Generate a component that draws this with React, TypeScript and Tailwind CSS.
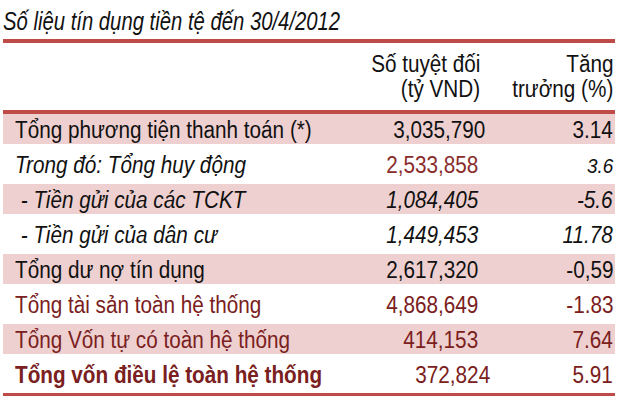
import React from 'react';

type Row = {
  label: string;
  value: string;
  growth: string;
  pink: boolean;
  labelCls: string;
  valueCls: string;
  growthCls: string;
};

const rows: Row[] = [
  { label: 'Tổng phương tiện thanh toán (*)', value: '3,035,790', growth: '3.14', pink: true, labelCls: 'text-[#111]', valueCls: 'text-[#111]', growthCls: 'text-[#111]' },
  { label: 'Trong đó: Tổng huy động', value: '2,533,858', growth: '3.6', pink: false, labelCls: 'italic text-[#111]', valueCls: 'text-[#8a2c2c]', growthCls: 'italic text-[21px] text-[#111]' },
  { label: ' - Tiền gửi của các TCKT', value: '1,084,405', growth: '-5.6', pink: true, labelCls: 'italic text-[#111]', valueCls: 'italic text-[#111]', growthCls: 'italic text-[#111]' },
  { label: ' - Tiền gửi của dân cư', value: '1,449,453', growth: '11.78', pink: false, labelCls: 'italic text-[#111]', valueCls: 'italic text-[#111]', growthCls: 'italic text-[#111]' },
  { label: 'Tổng dư nợ tín dụng', value: '2,617,320', growth: '-0,59', pink: true, labelCls: 'text-[#111]', valueCls: 'text-[#111]', growthCls: 'text-[#111]' },
  { label: 'Tổng tài sản toàn hệ thống', value: '4,868,649', growth: '-1.83', pink: false, labelCls: 'text-[#7a2020]', valueCls: 'text-[#7a2020]', growthCls: 'text-[#7a2020]' },
  { label: 'Tổng Vốn tự có toàn hệ thống', value: '414,153', growth: '7.64', pink: true, labelCls: 'text-[#7a2020]', valueCls: 'text-[#7a2020]', growthCls: 'text-[#7a2020]' },
  { label: 'Tổng vốn điều lệ toàn hệ thống', value: '372,824', growth: '5.91', pink: false, labelCls: 'font-bold text-[#7a2020]', valueCls: 'text-[#7a2020]', growthCls: 'text-[#7a2020]' },
];

// the source uses a condensed Arial; squeeze Liberation Sans to match
const Narrow = ({ children, right }: { children: React.ReactNode; right?: boolean }) => (
  <span className={`inline-block whitespace-pre scale-x-[0.9] ${right ? 'origin-right' : 'origin-left'}`}>{children}</span>
);

export default function App() {
  return (
    <div className="w-[620px] h-[400px] bg-white overflow-hidden font-['Liberation_Sans',Arial,sans-serif]">
      <div className="h-[39px] pl-[3px] pt-[6px] text-[26px] leading-[30px] italic text-[#111] whitespace-nowrap">
        <span className="inline-block origin-left scale-x-[0.78]">Số liệu tín dụng tiền tệ đến 30/4/2012</span>
      </div>
      <div className="mx-[3px] w-[612px]">
        <div className="h-[4px] bg-[#bf4b49]" />
        <div className="h-[67px] flex pt-[9px] text-[23px] leading-[25px] text-[#111]">
          <div className="flex-1" />
          <div className="w-[150px] text-right">
            <div><Narrow right>Số tuyệt đối</Narrow></div>
            <div><Narrow right>(tỷ VND)</Narrow></div>
          </div>
          <div className="w-[135px] text-right pr-[2px]">
            <div><Narrow right>Tăng</Narrow></div>
            <div><Narrow right>trưởng (%)</Narrow></div>
          </div>
        </div>
        <div className="h-[4px] bg-[#bf4b49]" />
        {rows.map((r, i) => (
          <div key={r.label} className={i === rows.length - 1 ? 'h-[34px]' : 'h-[35px]'}>
            <div className={`h-[30px] pt-[4px] flex items-baseline text-[23px] leading-[25px] ${r.pink ? 'bg-[#eed0d0]' : ''}`}>
              <div className={`flex-1 pl-[12px] ${r.labelCls}`}><Narrow>{r.label}</Narrow></div>
              <div className={`w-[150px] text-right pr-[2px] ${r.valueCls}`}><Narrow right>{r.value}</Narrow></div>
              <div className={`w-[135px] text-right pr-[2px] ${r.growthCls}`}><Narrow right>{r.growth}</Narrow></div>
            </div>
          </div>
        ))}
        <div className="h-[3px] bg-[#bf4b49]" />
      </div>
    </div>
  );
}
